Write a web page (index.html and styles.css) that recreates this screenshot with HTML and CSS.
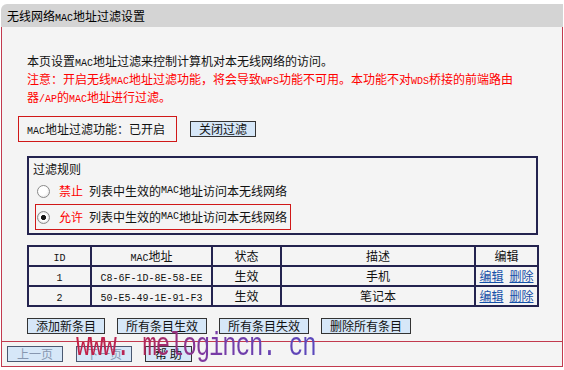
FILE: index.html
```html
<!DOCTYPE html>
<html lang="zh-CN">
<head>
    <meta charset="UTF-8">
    <meta name="viewport" content="width=device-width, initial-scale=1.0">
    <title>无线网络MAC地址过滤设置</title>
    <link rel="stylesheet" href="styles.css">
</head>
<body>
    <div class="panel">
        <div class="panel-title">无线网络<span class="en">MAC</span>地址过滤设置</div>
        <div class="panel-body">
            <p class="intro">本页设置<span class="en">MAC</span>地址过滤来控制计算机对本无线网络的访问。</p>
            <p class="notice">注意：开启无线<span class="en">MAC</span>地址过滤功能，将会导致<span class="en">WPS</span>功能不可用。本功能不对<span class="en">WDS</span>桥接的前端路由<br>器<span class="en">/AP</span>的<span class="en">MAC</span>地址进行过滤。</p>

            <div class="status-row">
                <div class="status-box"><span class="en">MAC</span>地址过滤功能：已开启</div>
                <button class="btn">关闭过滤</button>
            </div>

            <div class="rules">
                <div class="rules-title">过滤规则</div>
                <label class="rule">
                    <span class="radio"></span>
                    <span class="rule-key">禁止</span>列表中生效的<span class="en">MAC</span>地址访问本无线网络
                </label>
                <label class="rule selected">
                    <span class="radio checked"></span>
                    <span class="rule-key">允许</span>列表中生效的<span class="en">MAC</span>地址访问本无线网络
                </label>
            </div>

            <table class="mac-table">
                <colgroup>
                    <col style="width: 63px">
                    <col style="width: 121px">
                    <col style="width: 69px">
                    <col style="width: 194px">
                    <col style="width: 63px">
                </colgroup>
                <tr>
                    <td><span class="en">ID</span></td>
                    <td><span class="en">MAC</span>地址</td>
                    <td>状态</td>
                    <td>描述</td>
                    <td>编辑</td>
                </tr>
                <tr>
                    <td><span class="en">1</span></td>
                    <td><span class="en">C8-6F-1D-8E-58-EE</span></td>
                    <td>生效</td>
                    <td>手机</td>
                    <td><a href="#">编辑</a><a href="#">删除</a></td>
                </tr>
                <tr>
                    <td><span class="en">2</span></td>
                    <td><span class="en">50-E5-49-1E-91-F3</span></td>
                    <td>生效</td>
                    <td>笔记本</td>
                    <td><a href="#">编辑</a><a href="#">删除</a></td>
                </tr>
            </table>

            <div class="actions">
                <button class="btn">添加新条目</button>
                <button class="btn">所有条目生效</button>
                <button class="btn">所有条目失效</button>
                <button class="btn">删除所有条目</button>
            </div>
        </div>
        <div class="panel-foot">
            <button class="btn" disabled>上一页</button>
            <button class="btn" disabled>下一页</button>
            <button class="btn">帮 助</button>
            <div class="watermark">www. melogincn. cn</div>
        </div>
    </div>
</body>
</html>
```

FILE: styles.css
```css
body {
    margin: 0;
    background-color: #fff;
    font-family: "Noto Sans CJK SC", sans-serif;
    font-size: 12px;
    color: #111;
}
.en {
    font-family: "Liberation Mono", monospace;
    font-size: 10px;
    line-height: 10px;
}
.panel {
    width: 562px;
    margin: 4px 0 0 1px;
}
.panel-title {
    height: 23px;
    line-height: 23px;
    padding-left: 6px;
    background-color: #d4d4d4;
    border-top-left-radius: 6px;
    color: #000;
}
.panel-body {
    background-color: #f4f4f4;
    border-left: 1px solid #c23a4e;
    border-right: 1px solid #c23a4e;
    padding: 25px 24px 7px 25px;
}
.intro,
.notice {
    margin: 0;
    line-height: 18px;
}
.notice {
    color: #f00;
}
.status-row {
    display: flex;
    align-items: center;
    gap: 13px;
    margin: 10px 0 0 -9px;
}
.status-box {
    box-sizing: border-box;
    height: 26px;
    line-height: 24px;
    padding: 0 11px 0 8px;
    border: 1px solid #d01818;
}
.btn {
    height: 16px;
    padding: 0 8px;
    border: 1px solid #333;
    background-color: #d6e7f8;
    font-family: "Noto Sans CJK SC", sans-serif;
    font-size: 12px;
    line-height: 14px;
    color: #111;
    cursor: pointer;
}
.btn:disabled {
    color: #8797b0;
    border-color: #4a5870;
    cursor: default;
}
.rules {
    margin-top: 14px;
    padding: 2px 6px 3px 6px;
    border: 2px solid #24234f;
}
.rules-title {
    line-height: 18px;
    margin-left: -2px;
}
.rule {
    display: flex;
    align-items: center;
    width: fit-content;
    box-sizing: border-box;
    height: 26px;
    padding: 0 3px 0 1px;
    border: 1px solid transparent;
    line-height: 18px;
}
.rule.selected {
    border-color: #d01818;
}
.rule-key {
    color: #f00;
    margin-right: 6px;
}
.radio {
    box-sizing: border-box;
    width: 13px;
    height: 13px;
    margin-right: 9px;
    border-radius: 50%;
    border: 1px solid #8a8a8a;
    background: radial-gradient(circle at 40% 40%, #fff 45%, #dadada 100%);
}
.radio.checked {
    background: radial-gradient(circle, #151515 0 2.2px, #fff 2.9px 3.6px, #dadada 6px);
}
.mac-table {
    width: 100%;
    margin-top: 10px;
    border-collapse: collapse;
    table-layout: fixed;
}
.mac-table td {
    height: 18px;
    padding: 0;
    line-height: 18px;
    text-align: center;
    border: 2px solid #24234f;
}
.mac-table a {
    color: #1450a8;
    text-decoration: underline;
}
.mac-table a + a {
    margin-left: 6px;
}
.actions {
    display: flex;
    gap: 12px;
    margin-top: 11px;
}
.actions .btn {
    padding: 0 8px;
}
.panel-foot {
    position: relative;
    display: flex;
    align-items: center;
    gap: 13px;
    height: 24px;
    padding-left: 5px;
    background-color: #f4f4f4;
    border: 1px solid #c23a4e;
}
.panel-foot .btn {
    padding: 0 9px;
}
.watermark {
    position: absolute;
    left: 74px;
    top: -4px;
    font-family: "Liberation Mono", monospace;
    font-size: 24px;
    letter-spacing: -1.1px;
    line-height: 28px;
    transform: scaleY(1.35);
    transform-origin: left bottom;
    background: linear-gradient(90deg, #c41f45 0%, #b0285c 30%, #7a3aa4 55%, #5a48bc 100%);
    -webkit-background-clip: text;
    background-clip: text;
    color: transparent;
    pointer-events: none;
}
```
